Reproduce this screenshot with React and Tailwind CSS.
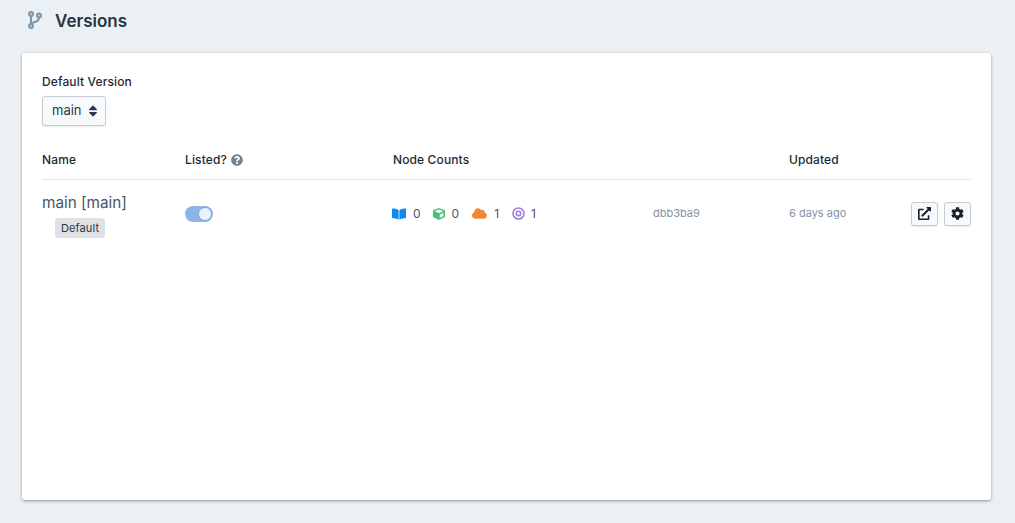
import React from "react";
import { FaBookOpen, FaCloud, FaCog, FaCube, FaExternalLinkAlt, FaQuestionCircle, FaSort } from "react-icons/fa";

const counts = [
  { Icon: FaBookOpen, color: "text-[#0d8bf0]", size: "text-[14px]", value: 0, gap: "mr-[12px]" },
  { Icon: FaCube, color: "text-[#48bb78]", size: "text-[12px]", value: 0, gap: "mr-[13px]" },
  { Icon: FaCloud, color: "text-[#ed8936]", size: "text-[15px]", value: 1, gap: "mr-[13px]" },
];

const btn = "flex h-6 w-[27px] items-center justify-center rounded-[3px] border border-[#c5ccd3] bg-[#f7fafc] text-[13px] text-[#1a202c] shadow-[0_1px_1px_rgba(0,0,0,0.08)]";

const App = () => {
  return (
    <div className="h-[523px] overflow-hidden bg-[#ebf0f4] px-[22px] font-['Inter',sans-serif] text-[#1a202c]">
      {/* Page title */}
      <div className="flex h-[53px] items-start pt-[11px]">
        <svg width="16" height="19" viewBox="0 0 16 19" fill="none" stroke="#7d93a8" strokeWidth="2.1" className="ml-[6px]">
          <circle cx="3" cy="3" r="1.9" />
          <circle cx="3" cy="15" r="1.9" />
          <circle cx="11" cy="4.5" r="1.9" />
          <path d="M3 5v8M11 6.5c0 2.8-1.4 3.6-3.6 4.2C5.4 11.2 3.8 11.8 3 13" />
        </svg>
        <h1 className="ml-[11px] text-[17px] leading-[20px] font-semibold text-[#2a3440]">Versions</h1>
      </div>

      {/* Card */}
      <div className="h-[447px] w-[969px] rounded-[3px] bg-white px-5 pt-[21px] shadow-[0_1px_3px_rgba(0,0,0,0.4)]">
        <div className="text-[12px] leading-4 font-medium tracking-[0.01em] text-[#1f2933]">Default Version</div>
        <button className="mt-[6px] flex h-[30px] w-16 items-center gap-[4px] rounded-[3px] border border-[#c5ccd3] bg-[#f7fafc] pl-[9px] text-[13px] text-[#2d3748] shadow-[0_1px_1px_rgba(0,0,0,0.08)]">
          main
          <FaSort className="text-[14px] text-[#2d3748]" />
        </button>

        {/* Table header */}
        <div className="mt-[19px] grid h-[35px] grid-cols-[143px_208px_396px_1fr] items-center border-b border-[#dde5ed] pb-[4px] text-[12px] font-medium tracking-[0.01em] text-[#1f2933]">
          <div>Name</div>
          <div className="flex items-center gap-[4px]">
            Listed?
            <FaQuestionCircle className="text-[12px] text-[#718096]" />
          </div>
          <div>Node Counts</div>
          <div>Updated</div>
        </div>

        {/* Row */}
        <div className="grid grid-cols-[143px_208px_260px_136px_1fr] items-center pt-[13px]">
          <div>
            <div className="pt-[1px] text-[15.3px] leading-[18px] text-[#4a5568]">main [main]</div>
            <span className="ml-[13px] mt-[6px] inline-block rounded-[3px] bg-[#dfe1e4] px-[6px] py-[3px] text-[11px] leading-[14px] tracking-[0.01em] text-[#2d3748]">Default</span>
          </div>
          <div className="-mt-[4px]">
            <div className="flex h-4 w-7 items-center justify-end rounded-full bg-[#8db4e4] pr-[1px]">
              <div className="h-[14px] w-[14px] rounded-full border border-[#7ea6d8] bg-[#ebf2fb]" />
            </div>
          </div>
          <div className="-mt-[4px] -ml-[1px] flex items-center text-[12px] text-[#4a5568]">
            {counts.map(({ Icon, color, size, value, gap }, i) => (
              <div key={i} className={`${gap} flex items-center gap-[7px]`}>
                <Icon className={`${color} ${size}`} />
                <span>{value}</span>
              </div>
            ))}
            <div className="flex items-center gap-[6px]">
              <svg width="13" height="13" viewBox="0 0 13 13" fill="none" stroke="#a47ae2" strokeWidth="1.6">
                <circle cx="6.5" cy="6.5" r="5.5" />
                <circle cx="6.5" cy="6.5" r="2.2" />
              </svg>
              <span>1</span>
            </div>
          </div>
          <div className="-mt-[4px] text-[11px] text-[#8494a5]">dbb3ba9</div>
          <div className="-mt-[4px] flex items-center justify-between text-[11px] text-[#8494a5]">
            <span>6 days ago</span>
            <div className="flex gap-[6px]">
              <button className={btn}>
                <FaExternalLinkAlt />
              </button>
              <button className={btn}>
                <FaCog />
              </button>
            </div>
          </div>
        </div>
      </div>
    </div>
  );
};

export default App;
